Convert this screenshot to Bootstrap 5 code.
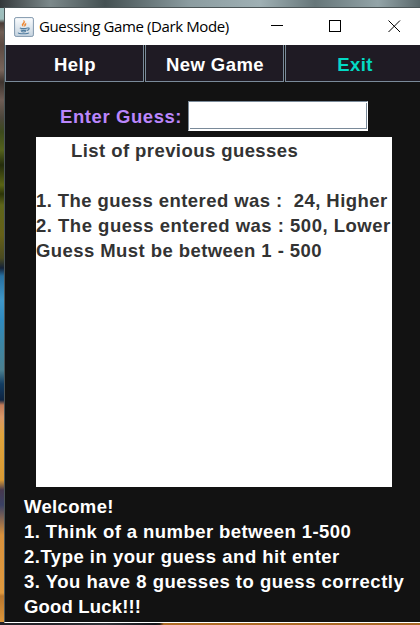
<!DOCTYPE html>
<html lang="en">
<head>
<meta charset="utf-8">
<meta name="viewport" content="width=device-width, initial-scale=1">
<title>Guessing Game (Dark Mode)</title>
<link href="https://cdn.jsdelivr.net/npm/bootstrap@5.3.0/dist/css/bootstrap.min.css" rel="stylesheet">
<style>
body{height:625px;font-family:"Liberation Sans",Arial,sans-serif;font-weight:700;font-size:18.5px;line-height:25px;letter-spacing:.5px;
background:linear-gradient(90deg,#34393b 0,#7c898b 12%,#445052 25%,#8b9ca0 45%,#9fb0b4 62%,#667679 75%,#93a4a8 90%,#59676a) 0 0/100% 8px no-repeat,
linear-gradient(90deg,#25242a 0 12%,#33343a 25%,#15151a 37%,#241d18 38%,#b06c25 39%,#a86826) 0 100%/100% 3px no-repeat,
linear-gradient(#34262a 0,#3b2c2e 5px,#9fc0bf 7px,#9dbcba 19px,#4a3c36 23px,#6f5e54 32px,#5c4a42 45px,#77645a 70px,#3f3530 82px,#6e5d55 100px,#4c463b 118px,#3c4a1c 132px,#54621c 150px,#242c0c 165px,#5a6414 185px,#2c3408 194px,#5e651a 205px,#666018 235px,#4a4a20 258px,#142238 268px,#2770a0 276px,#3f97c8 300px,#2f8bc0 320px,#3d86a4 345px,#4b8090 370px,#123c62 384px,#0e2442 400px,#c07a58 405px,#d99868 417px,#dfa43c 435px,#d99a34 480px,#46384e 490px,#3a4164 505px,#8a6850 520px,#d8913c 535px,#e09a3f 593px,#b9772e 596px,#e09a3c 625px)}
.app-window{margin:7px 0 0 4px;width:421px;height:616px;background:#121212;border:1px solid #4b5557;border-bottom-color:#fff}
.title-bar{height:37px;background:#fff;color:#000;font:400 15px/37px "Open Sans",sans-serif;letter-spacing:-.38px}
.title-bar .caption{margin-left:5px;white-space:nowrap;width:227px}
.app-icon{margin-left:9px}
.menu-strip{height:37px}
.menu-key{width:139px;height:37px;margin-right:1px;padding:0 0 0 1px;border:1px solid #7a8a99;border-top:0;border-radius:0;background:#1f1b24;color:#fff;font:inherit;letter-spacing:.45px;line-height:40px;flex:none}
.menu-key.quit{color:#03dac5}
.entry-row{height:30px;margin:19px 0 0 55px}
.entry-row label{color:#bb86fc;width:128px;letter-spacing:.58px}
.entry-row input{width:180px;height:30px;border:1px solid #7a8a99;border-radius:0;padding:0 3px;background:#fff;border-right-color:#fff;border-bottom-color:#fff;outline:0}
.entry-field{position:relative}
.entry-field::after{content:"";position:absolute;inset:2px 1px 2px 2px;border:solid #7a8a99;border-width:0 1px 1px 0;pointer-events:none}
.history{margin:6px 0 0 31px;width:356px;height:350px;background:#fff;color:#333;padding-top:1px}
.rules{margin:7px 0 0 19px;color:#fff}
.history div,.rules div{height:25px;white-space:pre}
.history .heading{padding-left:35px;margin-bottom:25px}
.t1{letter-spacing:.43px}
.t2{letter-spacing:.34px}
.t3{letter-spacing:.17px}
.t4{letter-spacing:.5px}
</style>
</head>
<body class="m-0 overflow-hidden">
<main class="app-window">
<header class="title-bar d-flex align-items-center">
<svg class="app-icon flex-shrink-0" width="20" height="20" viewBox="0 0 20 20">
<defs><linearGradient id="tile" x2="0" y2="1"><stop stop-color="#fcfdfe"/><stop offset="1" stop-color="#c5d3df"/></linearGradient></defs>
<rect x=".6" y=".6" width="18.8" height="18.8" rx="1.5" fill="url(#tile)" stroke="#8198ad"/>
<path d="M9.2 9.500C5.800 7.300 10.800 6 9.700 3.200c3 2.500-1.700 4-.5 6.300zM10.600 9.500c-.8-2 .2-2.400 1.500-3.300-.6 1.500.7 1.700-1.500 3.300z" fill="#ee8228" stroke="#ee8228" stroke-width=".4"/>
<path d="M5.800 10.900c2 .8 5.500.8 7.700 0M6.700 12.900c1.800.6 4.200.6 5.800 0M7.200 14.600c1.500.5 3.200.5 4.700 0M13.500 11c2.500-.5 2 1.800-.5 2.400M4.500 15.600c-1.200 1.500 9.500 1.600 10.500.1" fill="none" stroke="#4f7b9e" stroke-width="1.100"/>
</svg>
<span class="caption">Guessing Game (Dark Mode)</span>
<svg class="flex-shrink-0" width="140" height="37" fill="none" stroke="#000" shape-rendering="crispEdges">
<path d="M5 17.500h12M63.500 12.500h11v11h-11z"/><path d="M122.500 12.500l11.500 11.500M134 12.500l-11.500 11.500" shape-rendering="auto"/>
</svg>
</header>
<nav class="menu-strip d-flex overflow-hidden">
<button class="btn menu-key" type="button">Help</button>
<button class="btn menu-key" type="button">New Game</button>
<button class="btn menu-key quit" type="button">Exit</button>
</nav>
<div class="entry-row d-flex align-items-center">
<label for="guess">Enter Guess:</label>
<div class="entry-field d-flex"><input id="guess" type="text"></div>
</div>
<section class="history">
<div class="heading t1">List of previous guesses</div>
<div class="t1">1. The guess entered was :  24, Higher</div>
<div class="t4">2. The guess entered was : 500, Lower</div>
<div class="t1">Guess Must be between 1 - 500</div>
</section>
<section class="rules">
<div class="t2">Welcome!</div>
<div class="t1">1. Think of a number between 1-500</div>
<div>2.Type in your guess and hit enter</div>
<div class="t4">3. You have 8 guesses to guess correctly</div>
<div class="t3">Good Luck!!!</div>
</section>
</main>
<script src="https://cdn.jsdelivr.net/npm/bootstrap@5.3.0/dist/js/bootstrap.bundle.min.js"></script>
</body>
</html>
